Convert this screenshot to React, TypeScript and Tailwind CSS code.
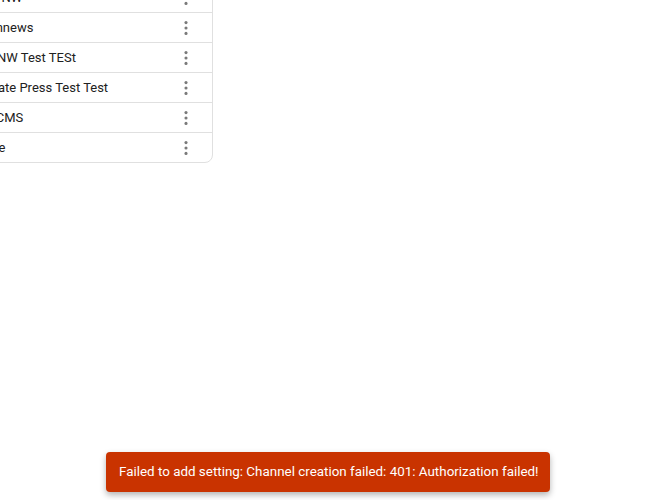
import React from 'react'

const rows = ['RTL NW', 'Brunnews', 'HD NW Test TESt', 'Private Press Test Test', 'DX CMS', 'Page']

function MoreDots() {
  return (
    <svg width="8" height="18" viewBox="0 0 8 18" className="text-[#7a7a7a]">
      <circle cx="4" cy="3.6" r="1.55" fill="currentColor" />
      <circle cx="4" cy="9" r="1.55" fill="currentColor" />
      <circle cx="4" cy="14.4" r="1.55" fill="currentColor" />
    </svg>
  )
}

export default function App() {
  return (
    <div
      className="relative w-[667px] h-[500px] overflow-hidden bg-white"
      style={{ fontFamily: 'Roboto, "Liberation Sans", sans-serif' }}
    >
      {/* Channel list card, scrolled partly out of view */}
      <div className="ml-[-41px] mt-[-18px] w-[254px] rounded-lg border border-[#e0e0e0] bg-white overflow-hidden">
        {rows.map((name, i) => (
          <div
            key={name}
            className={`flex h-[29px] box-content items-center justify-between pl-4 pr-[22px] ${
              i < rows.length - 1 ? 'border-b border-[#e0e0e0]' : ''
            }`}
          >
            <span className="pt-px text-[13px] text-[#212121] whitespace-nowrap">{name}</span>
            <MoreDots />
          </div>
        ))}
      </div>

      {/* Error toast */}
      <div className="absolute left-[106px] bottom-[8px] flex h-[40px] w-[444px] items-center rounded bg-[#c93300] px-[13px] pt-px text-[13.4px] text-white shadow-[0_3px_6px_rgba(0,0,0,0.3)] whitespace-nowrap">
        Failed to add setting: Channel creation failed: 401: Authorization failed!
      </div>
    </div>
  )
}
